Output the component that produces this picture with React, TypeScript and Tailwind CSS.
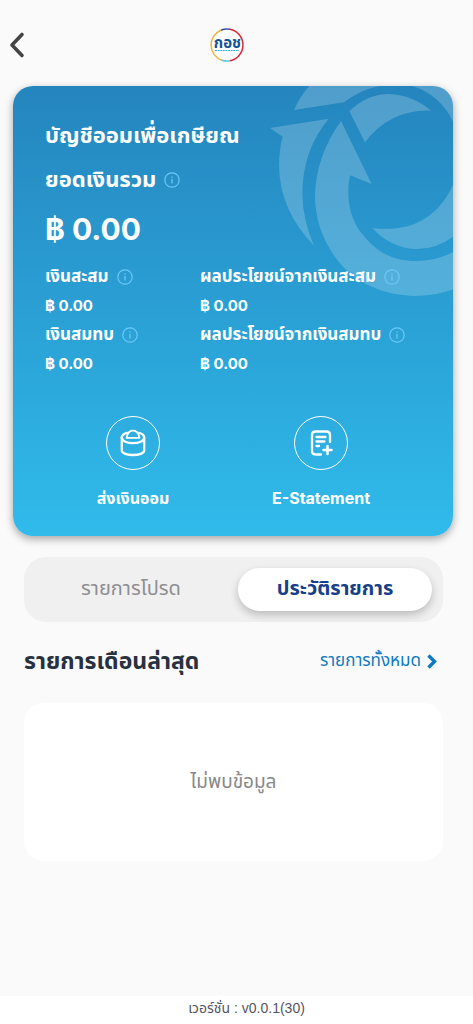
// Retirement savings account screen: balance card, transaction tabs and the
// latest month's list.

import type { ReactNode } from 'react'

function InfoIcon() {
  return (
    <svg width="16" height="16" viewBox="0 0 16 16" fill="none" stroke="#6CC8F8" aria-hidden="true">
      <circle cx="8" cy="8" r="7.2" strokeWidth="1.2" />
      <path d="M8 7V11.6" strokeWidth="1.3" />
      <path d="M8 4.4V5.8" strokeWidth="1.3" />
    </svg>
  )
}

function JarIcon() {
  return (
    <svg width="28" height="28" viewBox="0 0 28 28" fill="none" stroke="#FFFFFF" strokeWidth="2.3" strokeLinecap="round" strokeLinejoin="round" aria-hidden="true">
      <path d="M2.8 8.5V21.5C2.8 27.5 25.2 27.5 25.2 21.5V8.5" />
      <path d="M8 3.8C4.6 4.6 2.8 6.6 2.8 8.5C2.8 16 25.2 16 25.2 8.5C25.2 6.6 23.4 4.6 20 3.8" />
      <path d="M7.6 8.8C8.1 6 9 4 10.4 2.8C12 1.2 16 1.2 17.6 2.8C19 4 19.9 6 20.4 8.8Z" strokeWidth="1.8" />
    </svg>
  )
}

function StatementIcon() {
  return (
    <svg width="28" height="28" viewBox="0 0 28 28" fill="none" stroke="#FFFFFF" strokeWidth="2.3" strokeLinecap="round" strokeLinejoin="round" aria-hidden="true">
      <path d="M14 25.5H8.5C6.3 25.5 5 24.2 5 22V6C5 3.8 6.3 2.5 8.5 2.5H19.5C21.7 2.5 23 3.8 23 6V13" />
      <path d="M9.5 8H18.5M9.5 12.5H17.5M9.5 17H12" />
      <path d="M20.5 17V25M16.5 21H24.5" strokeWidth="2.5" />
    </svg>
  )
}

function Logo() {
  return (
    <div className="relative flex size-[34px] items-center justify-center">
      <svg className="absolute inset-0" width="34" height="34" viewBox="0 0 34 34" fill="none" strokeWidth="1.5" aria-hidden="true">
        <circle cx="17" cy="17" r="16" fill="#FFFFFF" />
        <path d="M11 2.2A16 16 0 0 1 20 1.3" stroke="#3B4FA0" />
        <path d="M20 1.3A16 16 0 0 1 20 32.7" stroke="#E02438" />
        <path d="M20 32.7A16 16 0 0 1 12 32.2" stroke="#62BDE0" />
        <path d="M12 32.2A16 16 0 0 1 11 2.2" stroke="#F2B33D" />
        <path d="M5 22.5H29" stroke="#3FA9D8" strokeWidth="1" strokeDasharray="2 0.6" />
      </svg>
      <span className="relative pb-1 text-[15px] leading-4 font-bold text-[#14539A]">กอช</span>
    </div>
  )
}

function CardArrows() {
  return (
    <svg className="absolute top-0 right-0" width="183" height="211" viewBox="60 48 549 633" fill="#FFFFFF" fillOpacity="0.2" aria-hidden="true">
      <path d="M178 48Q150 78 132 120L282 97Q330 60 388 48Z" />
      <path d="M488 48Q572 76 609 155V48Z" />
      <path d="M298 124Q350 72 418 72Q488 75 543 122Q420 118 345 217Z" />
      <path d="M60 174L236 146Q158 240 157 370Q158 450 192 527Q88 420 87 285Q88 235 98 200Z" />
      <path d="M273 153L365 342L300 316C284 400 308 462 345 502C384 548 430 573 498 573Q560 573 609 546V658Q560 678 490 678C400 674 322 642 270 580C220 520 195 450 195 375Q198 258 273 153Z" />
      <path d="M367 474C480 488 562 446 609 345V500Q560 537 497 537Q420 533 367 474Z" />
    </svg>
  )
}

const BALANCES = [
  { label: 'เงินสะสม', amount: '฿ 0.00' },
  { label: 'ผลประโยชน์จากเงินสะสม', amount: '฿ 0.00' },
  { label: 'เงินสมทบ', amount: '฿ 0.00' },
  { label: 'ผลประโยชน์จากเงินสมทบ', amount: '฿ 0.00' },
]

function CardAction({ label, children }: { label: string; children: ReactNode }) {
  return (
    <button type="button" className="flex flex-col items-center gap-4">
      <span className="flex size-[54px] items-center justify-center rounded-full border border-white">
        {children}
      </span>
      <span className="font-['Inter','Noto_Sans_Thai',sans-serif] text-base leading-6 font-bold">{label}</span>
    </button>
  )
}

export default function App() {
  return (
    <div className="flex min-h-screen flex-col bg-[#FAFAFA] font-['Liberation_Sans','Noto_Sans_Thai',sans-serif]">
      <header className="grid h-[86px] grid-cols-3 items-center pt-1 pr-[26px] pl-2">
        <button type="button" aria-label="Back" className="justify-self-start">
          <svg width="18" height="28" viewBox="0 0 18 28" fill="none" stroke="#444446" strokeWidth="3.6" strokeLinecap="round" strokeLinejoin="round" aria-hidden="true">
            <path d="M14 3.5L4 14L14 24.5" />
          </svg>
        </button>
        <div className="justify-self-center">
          <Logo />
        </div>
      </header>

      <main className="flex-1">
        <section className="relative mr-5 ml-[13px] rounded-[20px] bg-linear-to-b from-[#2585BE] to-[#30BBEB] pt-8 pb-[26px] text-white shadow-[0_3px_8px_rgba(0,0,0,0.35)]">
          <div className="absolute inset-0 overflow-hidden rounded-[20px]">
            <CardArrows />
          </div>

          <div className="relative pl-8">
            <h1 className="text-[22px] leading-9 font-bold">บัญชีออมเพื่อเกษียณ</h1>
            <div className="mt-2 flex items-center gap-2">
              <h2 className="text-[22px] leading-9 font-bold">ยอดเงินรวม</h2>
              <InfoIcon />
            </div>
            <p className="mt-2 font-['Inter',sans-serif] text-[30px] leading-[46px] font-bold">฿ 0.00</p>

            <dl className="mt-[10px] grid grid-cols-[155px_1fr]">
              {BALANCES.map((b) => (
                <div key={b.label}>
                  <dt className="flex items-center gap-2 text-[17px] leading-[29px] font-bold whitespace-nowrap">
                    {b.label}
                    <InfoIcon />
                  </dt>
                  <dd className="font-['Inter',sans-serif] text-[15px] leading-[29px] font-bold">{b.amount}</dd>
                </div>
              ))}
            </dl>
          </div>

          <div className="relative mt-[38px] grid grid-cols-2 justify-items-center pr-[38px] pl-[26px]">
            <CardAction label="ส่งเงินออม">
              <JarIcon />
            </CardAction>
            <CardAction label="E-Statement">
              <StatementIcon />
            </CardAction>
          </div>
        </section>

        <div className="pr-[30px] pl-6">
          <div role="tablist" className="mt-[21px] grid grid-cols-[1fr_194px] rounded-[22px] bg-[#F0F0F1] py-[11px] pr-[11px]">
            <button type="button" role="tab" aria-selected="false" className="h-[43px] pb-1 text-xl leading-8 text-[#8E8E90]">
              รายการโปรด
            </button>
            <button type="button" role="tab" aria-selected="true" className="h-[43px] rounded-full bg-white pb-1 text-xl leading-8 font-bold text-[#17408B] shadow-[0_4px_8px_rgba(0,0,0,0.22)]">
              ประวัติรายการ
            </button>
          </div>

          <div className="mt-[19px] flex items-center justify-between pr-1">
            <h2 className="text-[23px] leading-10 font-bold text-[#28313F]">รายการเดือนล่าสุด</h2>
            <a href="#all" className="flex items-center gap-1 text-[17px] leading-10 text-[#0E7AC0]">
              รายการทั้งหมด
              <svg width="14" height="16" viewBox="0 0 14 16" fill="none" stroke="currentColor" strokeWidth="3.4" aria-hidden="true">
                <path d="M3.5 2.5L9.5 8.5L3.5 14.5" />
              </svg>
            </a>
          </div>

          <div className="mt-[22px] flex h-[158px] items-center justify-center rounded-[20px] bg-white text-[19px] text-[#88888A]">
            ไม่พบข้อมูล
          </div>
        </div>
      </main>

      <footer className="h-7 bg-white pl-5 text-center text-sm leading-6 text-[#555562]">
        เวอร์ชั่น : v0.0.1(30)
      </footer>
    </div>
  )
}
